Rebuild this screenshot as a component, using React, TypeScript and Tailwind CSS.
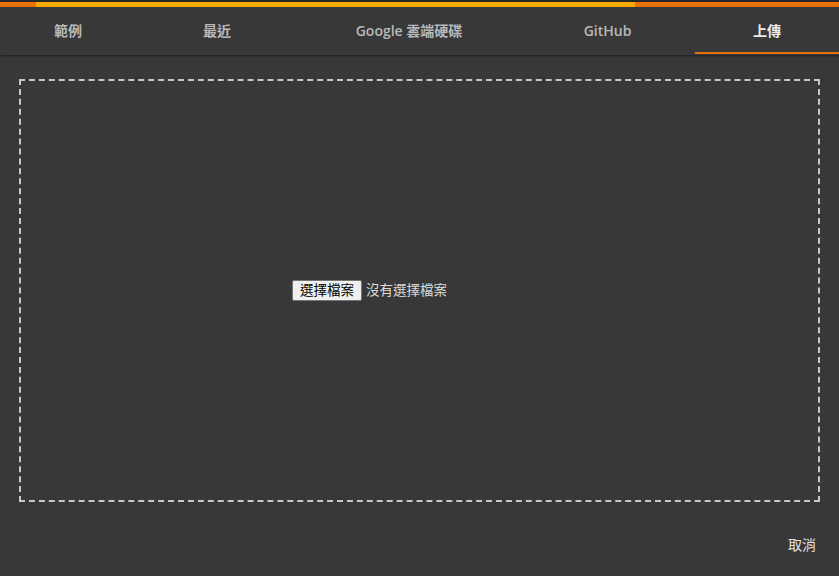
import React from 'react';

const TABS = [
  { label: '範例', width: 'w-[136px]' },
  { label: '最近', width: 'w-[162px]' },
  { label: 'Google 雲端硬碟', width: 'w-[222px]' },
  { label: 'GitHub', width: 'w-[175px]' },
  { label: '上傳', width: 'w-[144px]', active: true },
];

const FONT = "font-['Roboto','Noto_Sans_CJK_TC',sans-serif]";
const TAB_FONT = "font-['Open_Sans','Noto_Sans_CJK_TC',sans-serif]";

export default function App() {
  return (
    <div className={`w-[839px] h-[576px] bg-[#383838] flex flex-col overflow-hidden ${FONT}`}>
      {/* progress */}
      <div className="h-[2px] bg-[#262626]" />
      <div className="h-[5px] flex">
        <div className="w-[36px] bg-[#e8710a]" />
        <div className="w-[599px] bg-[#f9ab00]" />
        <div className="flex-1 bg-[#e8710a]" />
      </div>

      {/* tabs */}
      <div className="h-[48px] flex bg-[#383838] shadow-[0_1px_2px_rgba(0,0,0,0.45)] relative z-10">
        {TABS.map((t) => (
          <div key={t.label} className={`${t.width} h-full flex flex-col`}>
            <div
              className={`flex-1 flex items-center justify-center pt-[1px] text-[14px] font-semibold ${TAB_FONT} ${
                t.active ? 'text-[#ececec]' : 'text-[#b8b8b8]'
              }`}
            >
              {t.label}
            </div>
            <div className={`h-[2px] mb-[1px] ${t.active ? 'bg-[#e8710a]' : ''}`} />
          </div>
        ))}
      </div>

      {/* drop zone */}
      <div className="pt-[24px] px-[19px]">
        <div className="h-[423px] border-2 border-dashed border-[#c8c8c8] flex items-center justify-center">
          <div className="flex items-center gap-[4px] mr-[100px]">
            <button className="h-[21px] px-[7px] bg-[#efefef] border border-[#767676] rounded-[2px] text-[13.5px] leading-none text-black">
              選擇檔案
            </button>
            <span className="text-[13.5px] text-[#dcdcdc]">沒有選擇檔案</span>
          </div>
        </div>
      </div>

      {/* footer */}
      <div className="flex-1 flex items-center justify-end pr-[23px] pt-[12px]">
        <span className="text-[14px] text-[#e0e0e0]">取消</span>
      </div>
    </div>
  );
}
